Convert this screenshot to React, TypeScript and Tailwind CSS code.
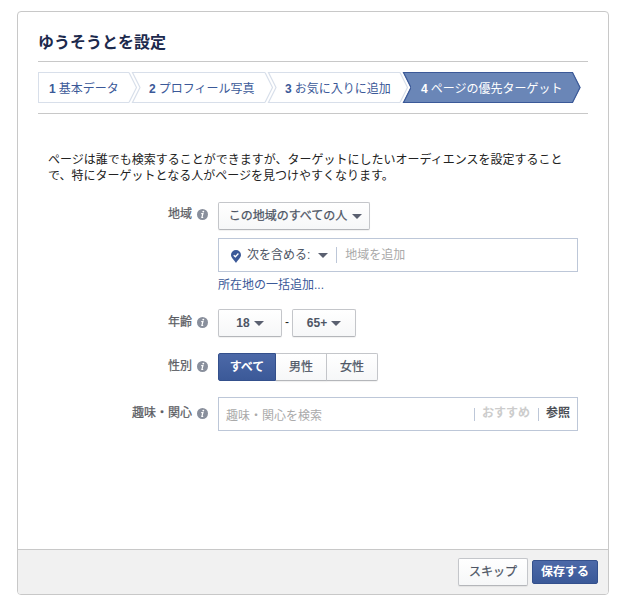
import { ReactNode } from 'react';
import clsx from 'clsx';

const steps = ['基本データ', 'プロフィール写真', 'お気に入りに追加'];
const stepWidths = ['w-[91px]', 'w-[125px]', 'w-[124px]'];

const buttonStyle =
    'flex items-center justify-center h-7 border border-[#c4c6ca] border-b-[#b4b6ba] bg-linear-to-b from-white to-[#f6f7f8] text-[#4e5665] shadow-[0_1px_1px_rgba(0,0,0,0.06)]';
const semiBold = '[-webkit-text-stroke:0.25px]';

function InfoIcon() {
    return (
        <svg className="w-[11px] h-[11px] mt-px ml-[5px] shrink-0" viewBox="0 0 11 11">
            <circle cx="5.5" cy="5.5" r="5.5" fill="#898f9c" />
            <circle cx="6.3" cy="2.6" r="0.95" fill="#fff" />
            <path d="M4.2 4.7H5.9L4.9 8.5H6.2" fill="none" stroke="#fff" strokeWidth="1.2" />
        </svg>
    );
}

function Caret() {
    return (
        <svg className="w-[10px] h-[5px] mt-px shrink-0" viewBox="0 0 10 5">
            <path d="M0 0H10L5 5Z" fill="#5a6070" />
        </svg>
    );
}

function PinIcon() {
    return (
        <svg className="w-[10px] h-[13px] shrink-0 mt-[2px]" viewBox="0 0 10 13">
            <path d="M5 0a5 5 0 0 1 5 5c0 3-3.5 5-5 8C3.5 10 0 8 0 5a5 5 0 0 1 5-5Z" fill="#3b5998" />
            <path d="M2.7 5.2 4.4 6.8 7.4 3.5" fill="none" stroke="#fff" strokeWidth="1.3" />
        </svg>
    );
}

function Chevron({ active }: { active?: boolean }) {
    return (
        <svg className="w-[11px] h-[31px] shrink-0 overflow-visible" viewBox="0 0 11 31">
            {active && <path d="M3 0H11.5V31H3L10.5 15.5Z" fill="#6a86b7" />}
            <path d="M0 .5 7.5 15.5 0 30.5" fill="none" stroke="#d8dfea" strokeWidth="1.2" />
            <path
                d="M11 .5H3.5L11 15.5 3.5 30.5H11"
                fill="none"
                stroke={active ? '#3b5998' : '#d8dfea'}
                strokeWidth="1.2"
            />
        </svg>
    );
}

function Row({ label, className, children }: { label: string; className?: string; children: ReactNode }) {
    return (
        <div className={clsx('flex items-start', className)}>
            <div className="flex items-center justify-end w-[170px] h-6 mr-[10px] text-[#5b5d63]">
                <span className={semiBold}>{label}</span>
                <InfoIcon />
            </div>
            {children}
        </div>
    );
}

export default function App() {
    return (
        <div className="w-[630px] h-[613px] bg-white pt-[11px] pl-[17px] text-[12px] leading-4 text-[#222] font-['Liberation_Sans','Noto_Sans_CJK_JP',sans-serif]">
            <div className="flex flex-col w-[592px] h-[584px] border border-[#c8c8c8] rounded-[4px] overflow-hidden">
                <div className="flex-1 px-5">
                    <h1 className="h-[50px] pt-[19px] text-[16px] leading-6 font-bold text-[#1d2a4d] border-b border-[#c8c8c8]">
                        ゆうそうとを設定
                    </h1>

                    <div className="flex h-[52px] pt-[10px] border-b border-[#c8c8c8] text-[#3b5998]">
                        {steps.map((step, i) => (
                            <div key={step} className="flex">
                                <div
                                    className={clsx(
                                        'flex items-center h-[31px] border-y border-[#d8dfea] pt-[2px]',
                                        stepWidths[i],
                                        i === 0 ? 'border-l pl-[10px]' : 'pl-[9px]'
                                    )}
                                >
                                    <b className="mr-[3px]">{i + 1}</b>
                                    <span className="whitespace-nowrap">{step}</span>
                                </div>
                                <Chevron active={i === 2} />
                            </div>
                        ))}
                        <div className="flex items-center w-[161px] h-[31px] pl-[10px] pt-[2px] bg-[#6a86b7] border-y border-[#3b5998] text-white">
                            <b className="mr-[3px]">4</b>
                            <span className="whitespace-nowrap">ページの優先ターゲット</span>
                        </div>
                        <svg className="w-[9px] h-[31px]" viewBox="0 0 9 31">
                            <path d="M0 0H.5L8.5 15.5.5 31H0Z" fill="#6a86b7" />
                            <path d="M0 .5H.5L8 15.5.5 30.5H0" fill="none" stroke="#3b5998" strokeWidth="1.2" />
                        </svg>
                    </div>

                    <p className="mt-[38px] ml-[10px] w-[518px]">
                        ページは誰でも検索することができますが、ターゲットにしたいオーディエンスを設定すること
                        <br />
                        で、特にターゲットとなる人がページを見つけやすくなります。
                    </p>

                    <Row label="地域" className="mt-[18px]">
                        <div>
                            <button className={clsx(buttonStyle, 'w-[152px] pl-[3px] rounded-[2px]')}>
                                <span className={clsx('mr-[5px]', semiBold)}>この地域のすべての人</span>
                                <Caret />
                            </button>
                            <div className="flex items-center w-[360px] h-[34px] mt-2 pl-[12px] border border-[#bdc7d8]">
                                <PinIcon />
                                <span className="ml-[6px] mr-[8px] text-[#4e5665]">次を含める:</span>
                                <Caret />
                                <span className="w-px h-4 ml-[8px] mr-[8px] bg-[#bdc7d8]" />
                                <span className="text-[#aaa]">地域を追加</span>
                            </div>
                            <a className="block mt-[5px] text-[#3b5998]">所在地の一括追加...</a>
                        </div>
                    </Row>

                    <Row label="年齢" className="mt-[16px] [&>div:first-child]:mt-px">
                        <button className={clsx(buttonStyle, 'w-16 rounded-[2px] font-bold')}>
                            <span className="mr-1">18</span>
                            <Caret />
                        </button>
                        <span className="w-[10px] text-center leading-[26px]">-</span>
                        <button className={clsx(buttonStyle, 'w-16 rounded-[2px] font-bold')}>
                            <span className="mr-1">65+</span>
                            <Caret />
                        </button>
                    </Row>

                    <Row label="性別" className="mt-4 [&>div:first-child]:mt-px">
                        <button className="w-[58px] h-7 rounded-l-[2px] border border-[#34508c] bg-linear-to-b from-[#4c69a8] to-[#3b5998] text-white font-bold">
                            すべて
                        </button>
                        <button className={clsx(buttonStyle, semiBold, 'w-[51px] border-l-0')}>男性</button>
                        <button className={clsx(buttonStyle, semiBold, 'w-[51px] border-l-0 rounded-r-[2px]')}>
                            女性
                        </button>
                    </Row>

                    <Row label="趣味・関心" className="mt-4 [&>div:first-child]:mt-1">
                        <div className="flex items-center w-[360px] h-[34px] pl-[7px] pr-[7px] border border-[#bdc7d8]">
                            <span className="mt-[3px] text-[#aaa]">趣味・関心を検索</span>
                            <span className="w-px h-[13px] ml-auto mr-[7px] bg-[#bdc7d8]" />
                            <span className="font-bold text-[#ccc] -mt-[2px]">おすすめ</span>
                            <span className="w-px h-[13px] ml-[8px] mr-[7px] bg-[#bdc7d8]" />
                            <span className="font-bold text-[#4b4f56] -mt-[2px]">参照</span>
                        </div>
                    </Row>
                </div>

                <div className="flex items-center justify-end h-[44px] pr-[10px] box-content border-t border-[#c8c8c8] bg-[#f1f1f1]">
                    <button className={clsx(buttonStyle, semiBold, 'w-[70px] mr-1 rounded-[2px]')}>スキップ</button>
                    <button className="w-[66px] h-6 rounded-[2px] border border-[#34508c] bg-linear-to-b from-[#4c69a8] to-[#3b5998] text-white font-bold">
                        保存する
                    </button>
                </div>
            </div>
        </div>
    );
}
